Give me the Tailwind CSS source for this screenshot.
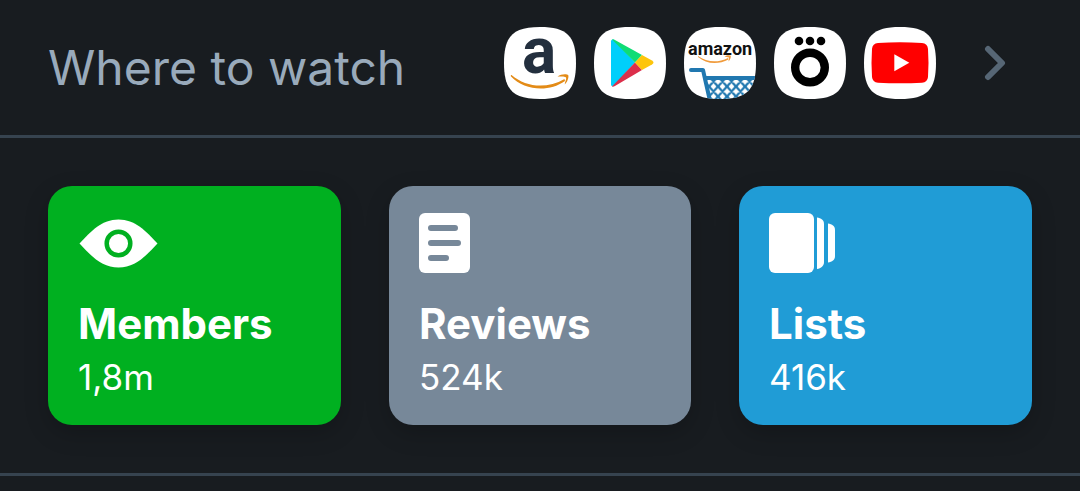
<!DOCTYPE html>
<html lang="en">
<head>
  <meta charset="UTF-8" />
  <meta name="viewport" content="width=device-width, initial-scale=1" />
  <title>Where to watch</title>
  <script src="https://cdn.jsdelivr.net/npm/@tailwindcss/browser@4"></script>
</head>
<body class="bg-[#181c20] min-h-screen font-['Inter',sans-serif]">
  <!-- shared outline of the service icons -->
  <svg class="hidden" aria-hidden="true">
    <defs>
      <path id="tile" d="M36 0C63 0 72 9 72 36S63 72 36 72S0 63 0 36S9 0 36 0Z" />
    </defs>
  </svg>

  <header class="border-b-3 border-[#36434f]">
    <a href="#watch" class="flex items-center justify-between pl-12 pr-18 pt-[27px] pb-9">
      <h1 class="pt-2.5 text-[48px] leading-none font-normal text-[#9ab]">Where to watch</h1>

      <div class="flex items-center gap-12">
        <div class="flex gap-[18px]">
          <svg class="size-18 overflow-visible" viewBox="0 0 72 72" role="img" aria-label="Amazon">
            <use href="#tile" fill="#fff" />
            <text x="18" y="46" class="font-['Roboto'] font-bold text-[64px]" fill="#232f3e">a</text>
            <path d="M7.5 48C22 60.500 43 62 60.500 52L61 54C44 66 20 63 7 49.500C6.500 48.500 7 47.700 7.500 48Z" fill="#e38b17" />
            <path d="M53.500 49.500C57 47 63 46.800 64.300 48.300C65 51 63 55.500 60.800 57.500C61 54.500 63 51.500 61.800 50.300C60 49 57 49.700 53.500 49.500Z" fill="#e38b17" />
          </svg>

          <svg class="size-18" viewBox="0 0 72 72" role="img" aria-label="Google Play">
            <use href="#tile" fill="#fff" />
            <path d="M17 14.500C17 12.500 18.500 12 20 12.800L41 35.500L20 59C18.500 59.800 17 59 17 57.500Z" fill="#00cffb" />
            <path d="M18 12.500Q19 12 20.500 12.800L48 28L41 35.500Z" fill="#0fdc75" />
            <path d="M18 59.500Q19 60 20.500 59.200L48 43L41 35.500Z" fill="#dc2f4b" />
            <path d="M48 28L58 33.500Q61 35.500 58 37.500L48 43L41 35.500Z" fill="#fdc50b" />
          </svg>

          <svg class="size-18" viewBox="0 0 72 72" role="img" aria-label="Amazon Shopping">
            <defs>
              <clipPath id="tileClip"><use href="#tile" /></clipPath>
              <pattern id="mesh" x="25" y="54.500" width="9" height="10" patternUnits="userSpaceOnUse">
                <path d="M-1 6.100L5.500 -1.100M-1 3.900L5.500 11.100M3.500 -1.100L10 6.100M3.500 11.100L10 3.900" stroke="#2178b0" stroke-width="2.200" />
              </pattern>
            </defs>
            <use href="#tile" fill="#fff" />
            <text x="4" y="28" class="font-['Roboto'] font-bold text-[18px]" fill="#111">amazon</text>
            <path d="M14 29C23 35.500 34 36 44 31L44.500 32.500C34 38 22 37 14 30Z" fill="#f09a3a" />
            <path d="M40.500 29.500C43 28 46 28 46.800 28.800C47 31 46 33 44.500 34.500L45 30.500Z" fill="#f09a3a" />
            <g clip-path="url(#tileClip)">
              <path d="M21 50H72V72H26Z" fill="url(#mesh)" />
              <g fill="none" stroke="#2178b0" stroke-width="4">
                <path d="M7 43H19L26 74" stroke-linecap="round" stroke-linejoin="round" />
                <path d="M21 51H72" />
              </g>
            </g>
          </svg>

          <svg class="size-18" viewBox="0 0 72 72" role="img" aria-label="Okko">
            <use href="#tile" fill="#fff" />
            <circle cx="36" cy="40.500" r="14.800" fill="none" stroke="#000" stroke-width="8.400" />
            <circle cx="25" cy="14" r="4.300" />
            <circle cx="36" cy="14" r="4.300" />
            <circle cx="47" cy="14" r="4.300" />
          </svg>

          <svg class="size-18" viewBox="0 0 72 72" role="img" aria-label="YouTube">
            <use href="#tile" fill="#fff" />
            <path d="M14 16Q36 14.500 58 16Q63.500 16.300 64 22Q65 36 64 50Q63.500 55.300 58 55.700Q36 57 14 55.700Q8.500 55.300 8 50Q7 36 8 22Q8.500 16.300 14 16Z" fill="#f00" />
            <path d="M30.300 27.300L45.300 35.700L30.300 44.300Z" fill="#fff" />
          </svg>
        </div>

        <svg class="w-6 h-9" viewBox="0 0 24 36" fill="none" stroke="#566675" stroke-width="6" stroke-linecap="round" stroke-linejoin="round" aria-hidden="true">
          <path d="M4 4L18 18L4 32" />
        </svg>
      </div>
    </a>
  </header>

  <main class="grid grid-cols-[293fr_302fr_293fr] gap-12 p-12 border-b-3 border-[#36434f]">
    <a href="#members" class="rounded-3xl bg-[#00b020] px-[30px] pt-[27px] pb-[26px] text-white shadow-[0_8px_24px_rgba(0,0,0,0.2)]">
      <svg class="h-15 w-20" viewBox="0 0 80 60" aria-hidden="true">
        <path d="M1.500 30.500C13 18 24 6.500 40.500 6.500S68 18 79.500 30.500C68 43 57 54.500 40.500 54.500S13 43 1.500 30.500Z" fill="#fff" />
        <circle cx="40.500" cy="30.500" r="11.800" fill="none" stroke="#00b020" stroke-width="4.500" />
      </svg>
      <h2 class="mt-7 text-[42px] leading-[46px] font-bold">Members</h2>
      <p class="mt-2 text-[35px] leading-11">1,8m</p>
    </a>

    <a href="#reviews" class="rounded-3xl bg-[#789] px-[30px] pt-[27px] pb-[26px] text-white shadow-[0_8px_24px_rgba(0,0,0,0.2)]">
      <svg class="h-15 w-20" viewBox="0 0 80 60" aria-hidden="true">
        <rect width="51" height="60" rx="6" fill="#fff" />
        <path d="M12 15H36M12 30H39M12 45H27" stroke="#789" stroke-width="6" stroke-linecap="round" />
      </svg>
      <h2 class="mt-7 text-[42px] leading-[46px] font-bold">Reviews</h2>
      <p class="mt-2 text-[35px] leading-11">524k</p>
    </a>

    <a href="#lists" class="rounded-3xl bg-[#209cd6] px-[30px] pt-[27px] pb-[26px] text-white shadow-[0_8px_24px_rgba(0,0,0,0.2)]">
      <svg class="h-15 w-20" viewBox="0 0 80 60" fill="#fff" aria-hidden="true">
        <rect width="45" height="60" rx="6" />
        <path d="M48 4.500C52 5 55 7 55 11V49C55 53 52 55.500 48 56Z" />
        <path d="M59 10.500C63 11 66 13 66 17V43C66 47 63 49 59 49.500Z" />
      </svg>
      <h2 class="mt-7 text-[42px] leading-[46px] font-bold">Lists</h2>
      <p class="mt-2 text-[35px] leading-11">416k</p>
    </a>
  </main>
</body>
</html>
